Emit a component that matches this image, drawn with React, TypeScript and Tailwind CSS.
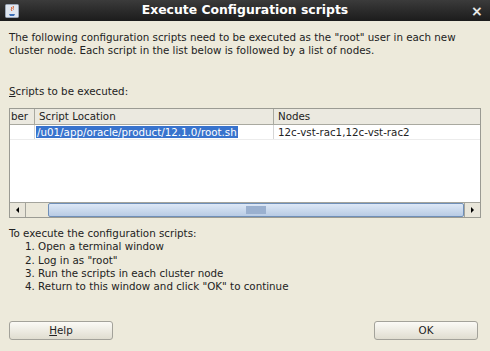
import React from "react";

const steps = [
	"Open a terminal window",
	'Log in as "root"',
	"Run the scripts in each cluster node",
	'Return to this window and click "OK" to continue',
];

const JavaIcon = () => (
	<svg width="14" height="14" viewBox="0 0 14 14">
		<rect x="0.5" y="0.5" width="13" height="13" rx="1" fill="#dfe6f0" stroke="#9aa6b8" />
		<path d="M4 10h6l-1 2H5z" fill="#3d6fb8" />
		<path d="M6 3c2 1-1 2 1 4M8 2c1.5 1.5-1 2 .5 3.5" stroke="#d9541e" strokeWidth="1" fill="none" />
	</svg>
);

const App: React.FC = () => {
	return (
		<div
			className="w-[490px] h-[351px] flex flex-col bg-[#edeadb] text-[10.3px] text-[#222] overflow-hidden"
			style={{ fontFamily: '"DejaVu Sans", Verdana, sans-serif' }}
		>
			{/* title bar */}
			<div className="h-[21px] flex items-center px-[5px] bg-gradient-to-b from-[#3b3b3b] to-[#1c1c1c] text-white">
				<JavaIcon />
				<div className="flex-1 text-center text-[12.4px] font-bold leading-none">
					Execute Configuration scripts
				</div>
				<span className="w-[14px] text-[14px] font-bold leading-none text-[#e8e8e8]">×</span>
			</div>

			<div className="flex-1 flex flex-col px-[9px] pt-[10px]">
				<p className="leading-[13px]">
					The following configuration scripts need to be executed as the "root" user in each new
					<br />
					cluster node. Each script in the list below is followed by a list of nodes.
				</p>

				<p className="mt-[28px] leading-[13px]">
					<span className="underline">S</span>cripts to be executed:
				</p>

				{/* table */}
				<div className="mt-[10px] h-[110px] w-[472px] border border-[#9b9b93] bg-white flex flex-col">
					<div className="flex h-[16px] bg-[#ebe9e0] border-b border-[#a9a9a0] leading-[15px]">
						<div className="w-[25px] pl-[1px] border-r border-[#a9a9a0] overflow-hidden">ber</div>
						<div className="w-[239px] pl-[4px] border-r border-[#a9a9a0]">Script Location</div>
						<div className="flex-1 pl-[4px]">Nodes</div>
					</div>
					<div className="flex h-[15px] leading-[15px] border-b border-[#ececec]">
						<div className="w-[25px] border-r border-[#d6d6d6]" />
						<div className="w-[239px] pl-[1px] border-r border-[#d6d6d6]">
							<span className="bg-[#3873cd] text-white px-[1px]">/u01/app/oracle/product/12.1.0/root.sh</span>
						</div>
						<div className="flex-1 pl-[4px]">12c-vst-rac1,12c-vst-rac2</div>
					</div>
					<div className="flex-1" />
					{/* horizontal scrollbar */}
					<div className="h-[15px] flex bg-[#ebe8da] border-t border-[#a4a49c]">
						<div className="w-[16px] flex items-center justify-center border-r border-[#a4a49c] bg-[#e9e6da]">
							<div className="w-0 h-0 border-y-[3px] border-y-transparent border-r-[3px] border-r-black" />
						</div>
						<div className="w-[22px]" />
						<div className="flex-1 flex items-center justify-center border border-[#6f8fb8] rounded-[2px] bg-gradient-to-b from-[#dde8f6] to-[#b8cbe4]">
							<div className="w-[20px] h-[8px] bg-[radial-gradient(#9ab0cf_1px,transparent_1px)] bg-[length:2px_2px]" />
						</div>
						<div className="w-[16px] flex items-center justify-center border-l border-[#a4a49c] bg-[#e9e6da]">
							<div className="w-0 h-0 border-y-[3px] border-y-transparent border-l-[3px] border-l-black" />
						</div>
					</div>
				</div>

				<div className="mt-[9px] leading-[13.3px]">
					<p>To execute the configuration scripts:</p>
					<ol className="pl-[16px]">
						{steps.map((s, i) => (
							<li key={i}>
								{i + 1}. {s}
							</li>
						))}
					</ol>
				</div>

				<div className="flex-1" />

				<div className="flex justify-between pb-[11px] pr-[3px]">
					<button className="w-[104px] h-[19px] rounded-[3px] border border-[#a3a29a] bg-gradient-to-b from-[#fbfaf6] to-[#e0ddd0] text-[10.3px] leading-none">
						<span className="underline">H</span>elp
					</button>
					<button className="w-[104px] h-[19px] rounded-[3px] border border-[#a3a29a] bg-gradient-to-b from-[#fbfaf6] to-[#e0ddd0] text-[10.3px] leading-none">
						OK
					</button>
				</div>
			</div>
		</div>
	);
};

export default App;
